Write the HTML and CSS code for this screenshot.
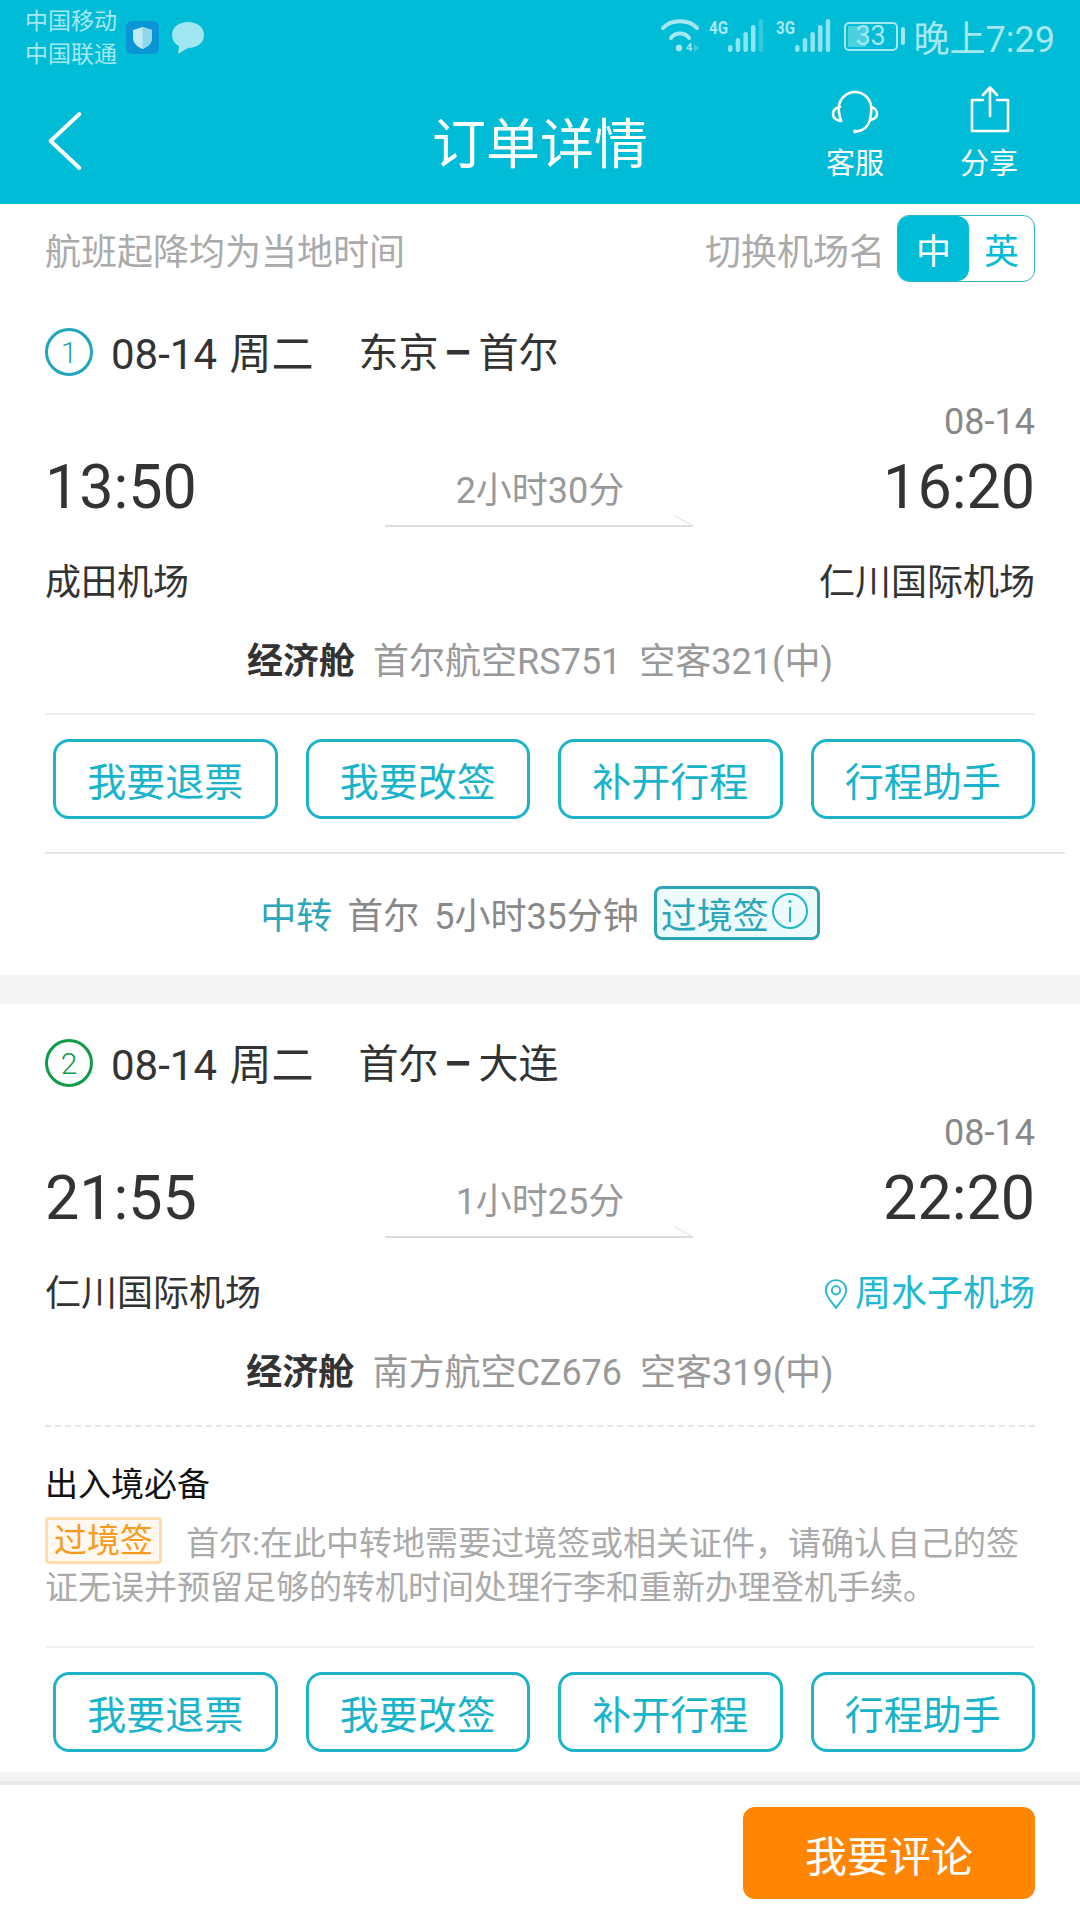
FILE: index.html
```html
<!DOCTYPE html>
<html lang="zh-CN">
<head>
    <meta charset="UTF-8">
    <meta name="viewport" content="width=device-width, initial-scale=1.0">
    <title>订单详情</title>
    <link rel="stylesheet" href="styles.css">
</head>
<body>
<div class="page">
    <header class="top">
        <div class="status">
            <div class="status-left">
                <div class="carriers">
                    <div>中国移动</div>
                    <div>中国联通</div>
                </div>
                <svg class="shield" viewBox="0 0 33 33">
                    <rect width="33" height="33" rx="6" fill="#0a95d6"/>
                    <path d="M16.5 6 L26 9 V17 C26 23 21 26 16.5 28 C12 26 7 23 7 17 V9 Z" fill="#bdeaf5"/>
                    <path d="M16.5 6 L26 9 V17 C26 23 21 26 16.5 28 Z" fill="#8fd8ea"/>
                </svg>
                <svg class="bubble" viewBox="0 0 34 34">
                    <path d="M17 1 C26 1 33 6 33 14 C33 22 26 27 17 27 L7 33 L8 25 C4 23 1 19 1 14 C1 6 8 1 17 1 Z" fill="#9fe6f0"/>
                </svg>
            </div>
            <div class="status-right">
                <svg class="wifi" viewBox="0 0 40 40" fill="none" stroke="#a5e8f0" stroke-width="4" stroke-linecap="round">
                    <path d="M3 12 C11 3 29 3 37 12"/>
                    <path d="M11 22 C15 16 25 16 29 22"/>
                    <circle cx="19" cy="32" r="3.200" fill="#a5e8f0" stroke="none"/>
                    <text x="26" y="35" class="wifi-num">4</text>
                    <path d="M34 28 L39 32 L34 36 Z" fill="#a5e8f0" stroke="none" opacity=".4"/>
                </svg>
                <svg class="signal" viewBox="0 0 55 40">
                    <text x="0" y="18" class="net" textLength="19" lengthAdjust="spacingAndGlyphs">4G</text>
                    <g fill="#8be5f2">
                        <rect x="19" y="29" width="4.500" height="7" rx="2.200"/>
                        <rect x="26.700" y="22" width="4.500" height="14" rx="2"/>
                        <rect x="34.400" y="16" width="4.500" height="20" rx="2"/>
                        <rect x="42" y="9" width="4.500" height="27" rx="2"/>
                        <rect x="49.700" y="3" width="4.500" height="33" rx="2" opacity=".35"/>
                    </g>
                </svg>
                <svg class="signal" viewBox="0 0 55 40">
                    <text x="0" y="18" class="net" textLength="19" lengthAdjust="spacingAndGlyphs">3G</text>
                    <g fill="#8be5f2">
                        <rect x="19" y="29" width="4.500" height="7" rx="2.200"/>
                        <rect x="26.700" y="22" width="4.500" height="14" rx="2"/>
                        <rect x="34.400" y="16" width="4.500" height="20" rx="2"/>
                        <rect x="42" y="9" width="4.500" height="27" rx="2"/>
                        <rect x="49.700" y="3" width="4.500" height="33" rx="2"/>
                    </g>
                </svg>
                <div class="battery">
                    <span class="battery-level"></span>
                    <span class="battery-num">33</span>
                </div>
                <span class="battery-cap"></span>
                <span class="clock">晚上7:29</span>
            </div>
        </div>
        <nav class="nav">
            <svg class="back" viewBox="0 0 40 66" fill="none" stroke="#fff" stroke-width="4.4" stroke-linecap="round" stroke-linejoin="round">
                <path d="M36 3 L4 33 L36 63"/>
            </svg>
            <h1 class="nav-title">订单详情</h1>
            <div class="nav-actions">
                <div class="nav-action">
                    <svg class="nav-icon" viewBox="0 0 48 48" fill="none" stroke="#fff" stroke-width="2.600" stroke-linecap="round" stroke-linejoin="round">
                        <path d="M10 35 C8 28 7 24 8 20 C9 12 16 6 24 6 C32 6 39 12 40 20 C41 24 40 28 39 33"/>
                        <path d="M9 21 C4 22 2 25 2 28 C2 31 4 34 10 35"/>
                        <path d="M40 21 C44 22 46 25 46 28 C46 31 44 33 39 34"/>
                        <path d="M39 34 C37 41 32 45 25 45.500"/>
                        <circle cx="24" cy="45.500" r="2" fill="#fff" stroke="none"/>
                    </svg>
                    <span>客服</span>
                </div>
                <div class="nav-action">
                    <svg class="nav-icon" viewBox="0 0 48 48" fill="none" stroke="#fff" stroke-width="2.600" stroke-linecap="round" stroke-linejoin="round">
                        <path d="M18 14 H7 V45 H43 V14 H32"/>
                        <path d="M25 30 V2"/>
                        <path d="M18 9 L25 1.500 L32 9"/>
                    </svg>
                    <span>分享</span>
                </div>
            </div>
        </nav>
    </header>

    <main class="content">
        <div class="notice">
            <span>航班起降均为当地时间</span>
            <div class="lang">
                <span>切换机场名</span>
                <div class="lang-switch">
                    <span class="lang-item lang-on">中</span>
                    <span class="lang-item">英</span>
                </div>
            </div>
        </div>

        <section class="leg leg-first">
            <div class="leg-title">
                <span class="leg-no">1</span>
                <span class="leg-date">08-14 周二</span>
                <span class="leg-route">东京<span class="route-dash">一</span>首尔</span>
            </div>
            <div class="arr-date">08-14</div>
            <div class="times">
                <span class="time">13:50</span>
                <div class="duration">
                    <span>2小时30分</span>
                    <svg class="arrow" viewBox="0 0 310 12" fill="none" stroke="#dedede" stroke-width="2">
                        <path d="M0 11 H308"/>
                        <path d="M308 11 L290 1" stroke-width="1"/>
                    </svg>
                </div>
                <span class="time time-end">16:20</span>
            </div>
            <div class="airports">
                <span>成田机场</span>
                <span>仁川国际机场</span>
            </div>
            <div class="flight-info">
                <b>经济舱</b>
                <span>首尔航空RS751</span>
                <span>空客321(中)</span>
            </div>
            <div class="line"></div>
            <div class="actions">
                <a class="action">我要退票</a>
                <a class="action">我要改签</a>
                <a class="action">补开行程</a>
                <a class="action">行程助手</a>
            </div>
            <div class="line line-long"></div>
            <div class="transfer">
                <span class="transfer-tag">中转</span>
                <span>首尔</span>
                <span>5小时35分钟</span>
                <span class="visa-box">过境签
                    <svg class="info" viewBox="0 0 38 38" fill="none" stroke="#1fb6d0" stroke-width="2">
                        <circle cx="19" cy="19" r="17"/>
                        <path d="M19 15 V30"/>
                        <circle cx="19" cy="9.500" r="1.600" fill="#1fb6d0" stroke="none"/>
                    </svg>
                </span>
            </div>
        </section>

        <section class="leg leg-second">
            <div class="leg-title">
                <span class="leg-no leg-no-green">2</span>
                <span class="leg-date">08-14 周二</span>
                <span class="leg-route">首尔<span class="route-dash">一</span>大连</span>
            </div>
            <div class="arr-date">08-14</div>
            <div class="times">
                <span class="time">21:55</span>
                <div class="duration">
                    <span>1小时25分</span>
                    <svg class="arrow" viewBox="0 0 310 12" fill="none" stroke="#dedede" stroke-width="2">
                        <path d="M0 11 H308"/>
                        <path d="M308 11 L290 1" stroke-width="1"/>
                    </svg>
                </div>
                <span class="time time-end">22:20</span>
            </div>
            <div class="airports">
                <span>仁川国际机场</span>
                <span class="airport-link">
                    <svg class="pin" viewBox="0 0 26 34" fill="none" stroke="#20b7d2" stroke-width="2">
                        <path d="M13 32 C8 25 2 20 2 13 C2 6 7 2 13 2 C19 2 24 6 24 13 C24 20 18 25 13 32 Z"/>
                        <circle cx="13" cy="13" r="4.500"/>
                    </svg>
                    周水子机场
                </span>
            </div>
            <div class="flight-info">
                <b>经济舱</b>
                <span>南方航空CZ676</span>
                <span>空客319(中)</span>
            </div>
            <div class="line-dash"></div>
            <h2 class="must-title">出入境必备</h2>
            <p class="must-text"><span class="must-tag">过境签</span>首尔:在此中转地需要过境签或相关证件，请确认自己的签证无误并预留足够的转机时间处理行李和重新办理登机手续。</p>
            <div class="line line-after-text"></div>
            <div class="actions">
                <a class="action">我要退票</a>
                <a class="action">我要改签</a>
                <a class="action">补开行程</a>
                <a class="action">行程助手</a>
            </div>
        </section>
    </main>

    <footer class="bottom">
        <a class="comment-btn">我要评论</a>
    </footer>
</div>
</body>
</html>
```

FILE: styles.css
```css
* {
    box-sizing: border-box;
}
body {
    margin: 0;
    font-family: Roboto, "Noto Sans CJK SC", sans-serif;
    color: #333;
    background: #fff;
}
.page {
    width: 1080px;
    height: 1920px;
    display: flex;
    flex-direction: column;
    overflow: hidden;
}

/* top bar */
.top {
    height: 204px;
    background: #00bcd6;
    color: #fff;
}
.status {
    height: 72px;
    padding: 0 25px;
    display: flex;
    justify-content: space-between;
    align-items: center;
    color: #a5e8f0;
}
.status-left, .status-right {
    display: flex;
    align-items: center;
}
.status-left {
    margin-top: 3px;
}
.carriers {
    font-size: 23px;
    line-height: 33px;
}
.shield {
    width: 33px;
    height: 33px;
    margin-left: 9px;
}
.bubble {
    width: 34px;
    height: 34px;
    margin-left: 12px;
}
.wifi {
    width: 40px;
    height: 40px;
}
.wifi-num {
    font-size: 11px;
    font-weight: 700;
    fill: #a5e8f0;
    stroke: none;
}
.signal {
    width: 55px;
    height: 40px;
    margin-left: 9px;
}
.signal + .signal {
    margin-left: 12px;
}
.net {
    font-size: 19px;
    font-weight: 700;
    fill: #a5e8f0;
}
.battery {
    position: relative;
    width: 54px;
    height: 29px;
    margin-left: 13px;
    border: 2px solid #a5e8f0;
    border-radius: 5px;
    font-size: 27px;
    line-height: 25px;
    text-align: center;
}
.battery-level {
    position: absolute;
    left: 2px;
    top: 2px;
    bottom: 2px;
    width: 18px;
    background: #a5e8f0;
    opacity: .45;
}
.battery-num {
    position: relative;
}
.battery-cap {
    width: 4px;
    height: 18px;
    margin-left: 3px;
    background: #a5e8f0;
    border-radius: 2px;
}
.clock {
    margin-left: 9px;
    font-size: 36px;
}
.nav {
    height: 132px;
    padding: 0 36px;
    display: grid;
    grid-template-columns: 1fr auto 1fr;
    align-items: center;
}
.back {
    width: 36px;
    height: 62px;
    margin: 6px 0 0 11px;
}
.nav-title {
    margin: 4px 0 0;
    font-size: 54px;
    font-weight: 400;
}
.nav-actions {
    align-self: start;
    padding-top: 14px;
    display: flex;
    justify-content: flex-end;
    gap: 24px;
}
.nav-action {
    width: 110px;
    display: flex;
    flex-direction: column;
    align-items: center;
    font-size: 29px;
    line-height: 40px;
}
.nav-icon {
    width: 48px;
    height: 48px;
    margin-bottom: 10px;
}

/* scroll area */
.content {
    flex: 1;
    background: #f4f4f4;
    overflow: hidden;
}
.notice {
    height: 90px;
    padding: 0 45px;
    display: flex;
    justify-content: space-between;
    align-items: center;
    background: #fff;
    font-size: 36px;
    color: #aaa;
}
.lang {
    display: flex;
    align-items: center;
    gap: 12px;
}
.lang-switch {
    width: 138px;
    height: 67px;
    margin-bottom: 2px;
    display: flex;
    border: 1px solid #2cb5c9;
    border-radius: 12px;
    overflow: hidden;
}
.lang-item {
    flex: 1;
    display: flex;
    justify-content: center;
    align-items: center;
    font-size: 35px;
    color: #00bcd6;
}
.lang-on {
    flex: none;
    width: 71px;
    background: #00bcd6;
    color: #fff;
    border-radius: 0 12px 12px 0;
}
.leg {
    padding: 34px 45px 35px;
    background: #fff;
}
.leg-second {
    margin-top: 29px;
    padding: 35px 45px 20px;
}
.leg-title {
    height: 48px;
    display: flex;
    align-items: center;
}
.leg-no {
    width: 48px;
    height: 48px;
    display: flex;
    justify-content: center;
    align-items: center;
    border: 3px solid #20a5ba;
    border-radius: 50%;
    font-size: 30px;
    font-weight: 300;
    color: #20a5ba;
}
.leg-no-green {
    border-color: #0e9b4a;
    color: #0e9b4a;
}
.leg-date {
    margin: 0 45px 4px 18px;
    font-size: 42px;
    word-spacing: 2px;
}
.leg-route {
    margin-bottom: 4px;
    font-size: 40px;
}
.route-dash {
    display: inline-block;
    transform: scale(.6, 1.4);
}
.arr-date {
    margin-top: 26px;
    font-size: 36px;
    line-height: 40px;
    color: #888;
    text-align: right;
}
.times {
    height: 80px;
    margin-top: 10px;
    display: grid;
    grid-template-columns: 1fr 310px 1fr;
}
.time {
    font-size: 61px;
    line-height: 70px;
}
.time-end {
    text-align: right;
}
.duration {
    padding-top: 19px;
    font-size: 36px;
    line-height: 40px;
    color: #999;
    text-align: center;
}
.arrow {
    display: block;
    width: 310px;
    height: 12px;
    margin-top: 4px;
}
.airports {
    margin-top: 27px;
    display: flex;
    justify-content: space-between;
    font-size: 36px;
    line-height: 48px;
}
.airport-link {
    display: flex;
    align-items: center;
    gap: 7px;
    color: #20b7d2;
}
.pin {
    width: 24px;
    height: 34px;
}
.flight-info {
    margin-top: 31px;
    display: flex;
    justify-content: center;
    gap: 18px;
    font-size: 36px;
    line-height: 48px;
    color: #999;
}
.flight-info b {
    color: #333;
}
.line {
    height: 2px;
    margin-top: 27px;
    background: #efefef;
}
.line-long {
    margin: 33px -30px 0 0;
    background: #e6e6e6;
}
.line-dash {
    margin-top: 28px;
    border-top: 2px dashed #e6e6e6;
}
.line-after-text {
    margin-top: 36px;
}
.actions {
    margin-top: 24px;
    padding-left: 8px;
    display: flex;
    gap: 28px;
}
.action {
    flex: 1;
    height: 80px;
    display: flex;
    justify-content: center;
    align-items: center;
    border: 3px solid #1db3ca;
    border-radius: 16px;
    font-size: 39px;
    color: #19b4cb;
}
.transfer {
    height: 54px;
    margin-top: 32px;
    display: flex;
    justify-content: center;
    align-items: center;
    gap: 15px;
    font-size: 36px;
    color: #888;
}
.transfer-tag {
    color: #2ba6ba;
}
.visa-box {
    width: 166px;
    height: 54px;
    padding-right: 4px;
    display: flex;
    align-items: center;
    justify-content: center;
    gap: 2px;
    border: 3px solid #2ca5b7;
    border-radius: 8px;
    background: #eefbfd;
    color: #2ba6ba;
    white-space: nowrap;
}
.info {
    width: 38px;
    height: 38px;
    margin-bottom: 4px;
}
.must-title {
    margin: 36px 0 0;
    font-size: 33px;
    font-weight: 400;
    line-height: 44px;
    color: #111;
}
.must-text {
    margin: 15px 0 0;
    font-size: 33px;
    line-height: 44px;
    color: #aaa;
}
.must-tag {
    display: inline-block;
    height: 47px;
    margin: -5px 24px 0 0;
    padding: 0 6px;
    vertical-align: top;
    border: 3px solid #fedcae;
    border-radius: 4px;
    background: #fff9f1;
    line-height: 41px;
    color: #f99a1c;
}

/* bottom bar */
.bottom {
    height: 139px;
    padding: 22px 45px 0 0;
    display: flex;
    justify-content: flex-end;
    align-items: flex-start;
    border-top: 4px solid #e8e8e8;
    background: #fff;
}
.comment-btn {
    width: 292px;
    height: 92px;
    display: flex;
    justify-content: center;
    align-items: center;
    border-radius: 12px;
    background: #ff8504;
    font-size: 42px;
    color: #fff;
}
```
